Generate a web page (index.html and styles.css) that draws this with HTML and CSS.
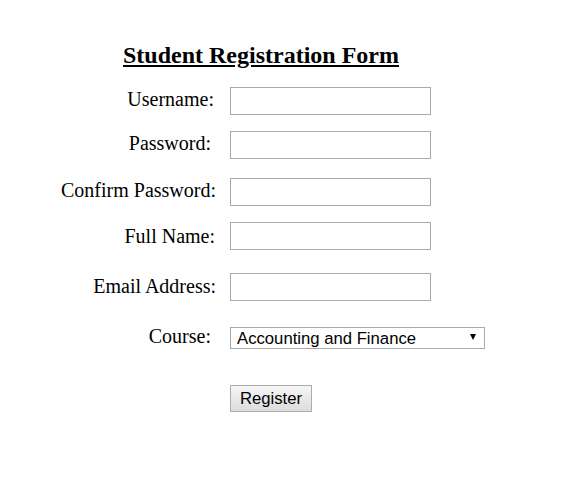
FILE: index.html
```html
<!DOCTYPE html>
<html lang="en">
<head>
    <meta charset="UTF-8">
    <title>Student Registration Form</title>
    <link rel="stylesheet" href="styles.css">
</head>
<body>
    <div class="container">
        <h2>Student Registration Form</h2>

        <form id="registerForm">
            <div class="row first">
                <label for="username" class="narrow">Username:</label>
                <input type="text" id="username" name="username">
            </div>
            <div class="row">
                <label for="password" class="narrower">Password:</label>
                <input type="password" id="password" name="password">
            </div>
            <div class="row wide">
                <label for="confirm">Confirm Password:</label>
                <input type="password" id="confirm" name="confirm">
            </div>
            <div class="row low">
                <label for="fullname" class="slight">Full Name:</label>
                <input type="text" id="fullname" name="fullname">
            </div>
            <div class="row wider mid">
                <label for="email">Email Address:</label>
                <input type="text" id="email" name="email">
            </div>
            <div class="row widest">
                <label for="course" class="narrower">Course:</label>
                <div class="select-wrap">
                    <select id="course" name="course">
                        <option>Accounting and Finance</option>
                        <option>Computer Science</option>
                        <option>Business Administration</option>
                    </select>
                </div>
            </div>
            <div class="row submit-row">
                <span class="spacer"></span>
                <button type="submit">Register</button>
            </div>
        </form>
    </div>
</body>
</html>
```

FILE: styles.css
```css
body {
    margin: 0;
    font-family: "Liberation Serif", "Times New Roman", serif;
    background: white;
    color: black;
}
.container {
    padding: 41px 0 0 34px;
}
h2 {
    margin: 0 0 0 89px;
    font-size: 24px;
    font-weight: bold;
    text-decoration: underline;
    line-height: 28px;
}
.row {
    display: flex;
    align-items: center;
    margin-top: 16px;
}
.row.first {
    margin-top: 18px;
}
.row.wide {
    margin-top: 19px;
}
.row.wider {
    margin-top: 23px;
}
.row.widest {
    margin-top: 23px;
}
.row.submit-row {
    margin-top: 33px;
}
label, .spacer {
    flex-shrink: 0;
    width: 196px;
    padding-right: 14px;
    box-sizing: border-box;
    text-align: right;
    white-space: nowrap;
    font-size: 20px;
    line-height: 24px;
}
label {
    margin-bottom: 4px;
}
.row.low label {
    margin-bottom: 0;
}
.row.mid label {
    margin-bottom: 2px;
}
label.narrow {
    padding-right: 16px;
}
label.narrower {
    padding-right: 19px;
}
label.slight {
    padding-right: 15px;
}
input {
    width: 201px;
    height: 28px;
    box-sizing: border-box;
    border: 1px solid #a9a9a9;
    margin: 0;
    padding: 2px;
    font-size: 16px;
}
.select-wrap {
    position: relative;
}
.select-wrap::after {
    content: "";
    position: absolute;
    right: 9px;
    top: 7px;
    border-left: 3px solid transparent;
    border-right: 3px solid transparent;
    border-top: 6px solid black;
    pointer-events: none;
}
select {
    appearance: none;
    -webkit-appearance: none;
    display: block;
    width: 255px;
    height: 22px;
    border: 1px solid #a9a9a9;
    border-radius: 0;
    background: white;
    margin: 0;
    padding: 0 0 0 6px;
    font-family: "Liberation Sans", Arial, sans-serif;
    font-size: 16.7px;
    color: black;
}
button {
    width: 82px;
    height: 27px;
    margin: 0;
    padding: 0;
    border: 1px solid #adadad;
    background: linear-gradient(#f6f6f6, #dcdcdc);
    font-family: "Liberation Sans", Arial, sans-serif;
    font-size: 16.7px;
    color: black;
    cursor: pointer;
}
```
